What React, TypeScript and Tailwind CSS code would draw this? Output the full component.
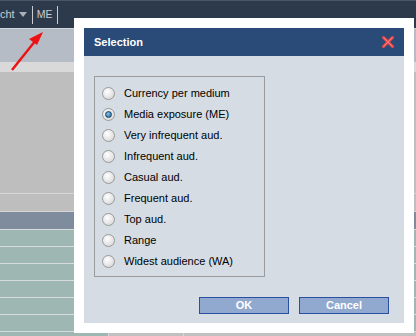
import React from "react";

const options = [
  "Currency per medium",
  "Media exposure (ME)",
  "Very infrequent aud.",
  "Infrequent aud.",
  "Casual aud.",
  "Frequent aud.",
  "Top aud.",
  "Range",
  "Widest audience (WA)",
];

function Radio({ checked }: { checked: boolean }) {
  return (
    <div className="w-[13px] h-[13px] rounded-full border border-[#9a9a9a] bg-[radial-gradient(circle_at_40%_35%,#ffffff,#d0d0d0)] flex items-center justify-center">
      {checked && (
        <div className="w-[7px] h-[7px] rounded-full bg-[radial-gradient(circle_at_40%_35%,#7fc4ea,#1b5e93)] border border-[#1d3f66]" />
      )}
    </div>
  );
}

export default function App() {
  return (
    <div className="relative w-[416px] h-[336px] overflow-hidden font-['Liberation_Sans',Arial,sans-serif] text-[11px]">
      {/* background page */}
      <div className="flex flex-col w-full h-full">
        <div className="h-[28px] bg-[#2d3a4b] border-t border-[#4a5565] flex items-center text-[#c9cdd3] text-[11px]">
          <span>cht</span>
          <span className="ml-[4px] w-0 h-0 border-l-[4px] border-r-[4px] border-t-[5px] border-l-transparent border-r-transparent border-t-[#a9b0b9]" />
          <span className="ml-[5px] w-px h-[18px] bg-[#c9cdd3]" />
          <span className="ml-[4px] text-[10.5px]">ME</span>
          <span className="ml-[5px] w-px h-[18px] bg-[#c9cdd3]" />
        </div>
        <div className="h-[34px] bg-[#b5bcc5] border-t border-[#d0d5db]" />
        <div className="h-[10px] bg-[#d9d9d9]" />
        <div className="h-[121px] bg-[#bebebe]" />
        <div className="h-[18px] bg-[#bebebe] border-t border-[#d6d6d6]" />
        <div className="h-[18px] bg-[#7e8c9e] border-t border-[#d6d6d6]" />
        {[0, 1, 2, 3, 4, 5].map((i) => (
          <div key={i} className="h-[17px] bg-[#9fb7b3] border-t border-[#d6dcdb]" />
        ))}
        <div className="flex-1 flex border-t border-[#d6dcdb]">
          <div className="w-[108px] bg-[#9fb7b3]" />
          <div className="w-[75px] bg-[#c0c0c0] border-l border-[#d6d6d6]" />
          <div className="flex-1 bg-[#c0c0c0] border-l border-[#d6d6d6]" />
        </div>
      </div>

      {/* arrow */}
      <svg className="absolute left-0 top-0" width="60" height="80" viewBox="0 0 60 80">
        <line x1="12" y1="70" x2="36" y2="40" stroke="#ee1111" strokeWidth="2.4" />
        <polygon points="43,32 29,39 37,45" fill="#ee1111" />
      </svg>

      {/* dialog */}
      <div className="absolute left-[74px] top-[18px] w-[340px] h-[315px] bg-white p-[10px]">
        <div className="flex flex-col w-full h-full">
          <div className="h-[28px] bg-[#2a4a77] flex items-center justify-between pl-[10px] pr-[9px]">
            <span className="text-white font-bold text-[11px]">Selection</span>
            <svg width="14" height="14" viewBox="0 0 14 14">
              <path d="M2.5 2.5 L11.5 11.5 M11.5 2.5 L2.5 11.5" stroke="#f14a4a" strokeWidth="3" strokeLinecap="round" />
              <path d="M3 3 L11 11 M11 3 L3 11" stroke="#ff8a8a" strokeWidth="0.8" strokeLinecap="round" />
            </svg>
          </div>
          <div className="flex-1 bg-[#d5dce3] pl-[10px] pt-[20px] pr-[15px]">
            <div className="w-[171px] h-[201px] border border-[#9b9b9b] flex flex-col pt-[10px] pl-[7px] gap-[8px]">
              {options.map((o, i) => (
                <div key={o} className="flex items-center h-[13px]">
                  <Radio checked={i === 1} />
                  <span className="ml-[9px] text-black text-[11px] leading-none">{o}</span>
                </div>
              ))}
            </div>
            <div className="flex justify-end gap-[10px] mt-[20px]">
              <button className="w-[90px] h-[17px] bg-[#91a8cf] border border-[#2a4fa0] text-white font-bold text-[11px] leading-none">
                OK
              </button>
              <button className="w-[90px] h-[17px] bg-[#91a8cf] border border-[#2a4fa0] text-white font-bold text-[11px] leading-none">
                Cancel
              </button>
            </div>
          </div>
        </div>
      </div>
    </div>
  );
}
